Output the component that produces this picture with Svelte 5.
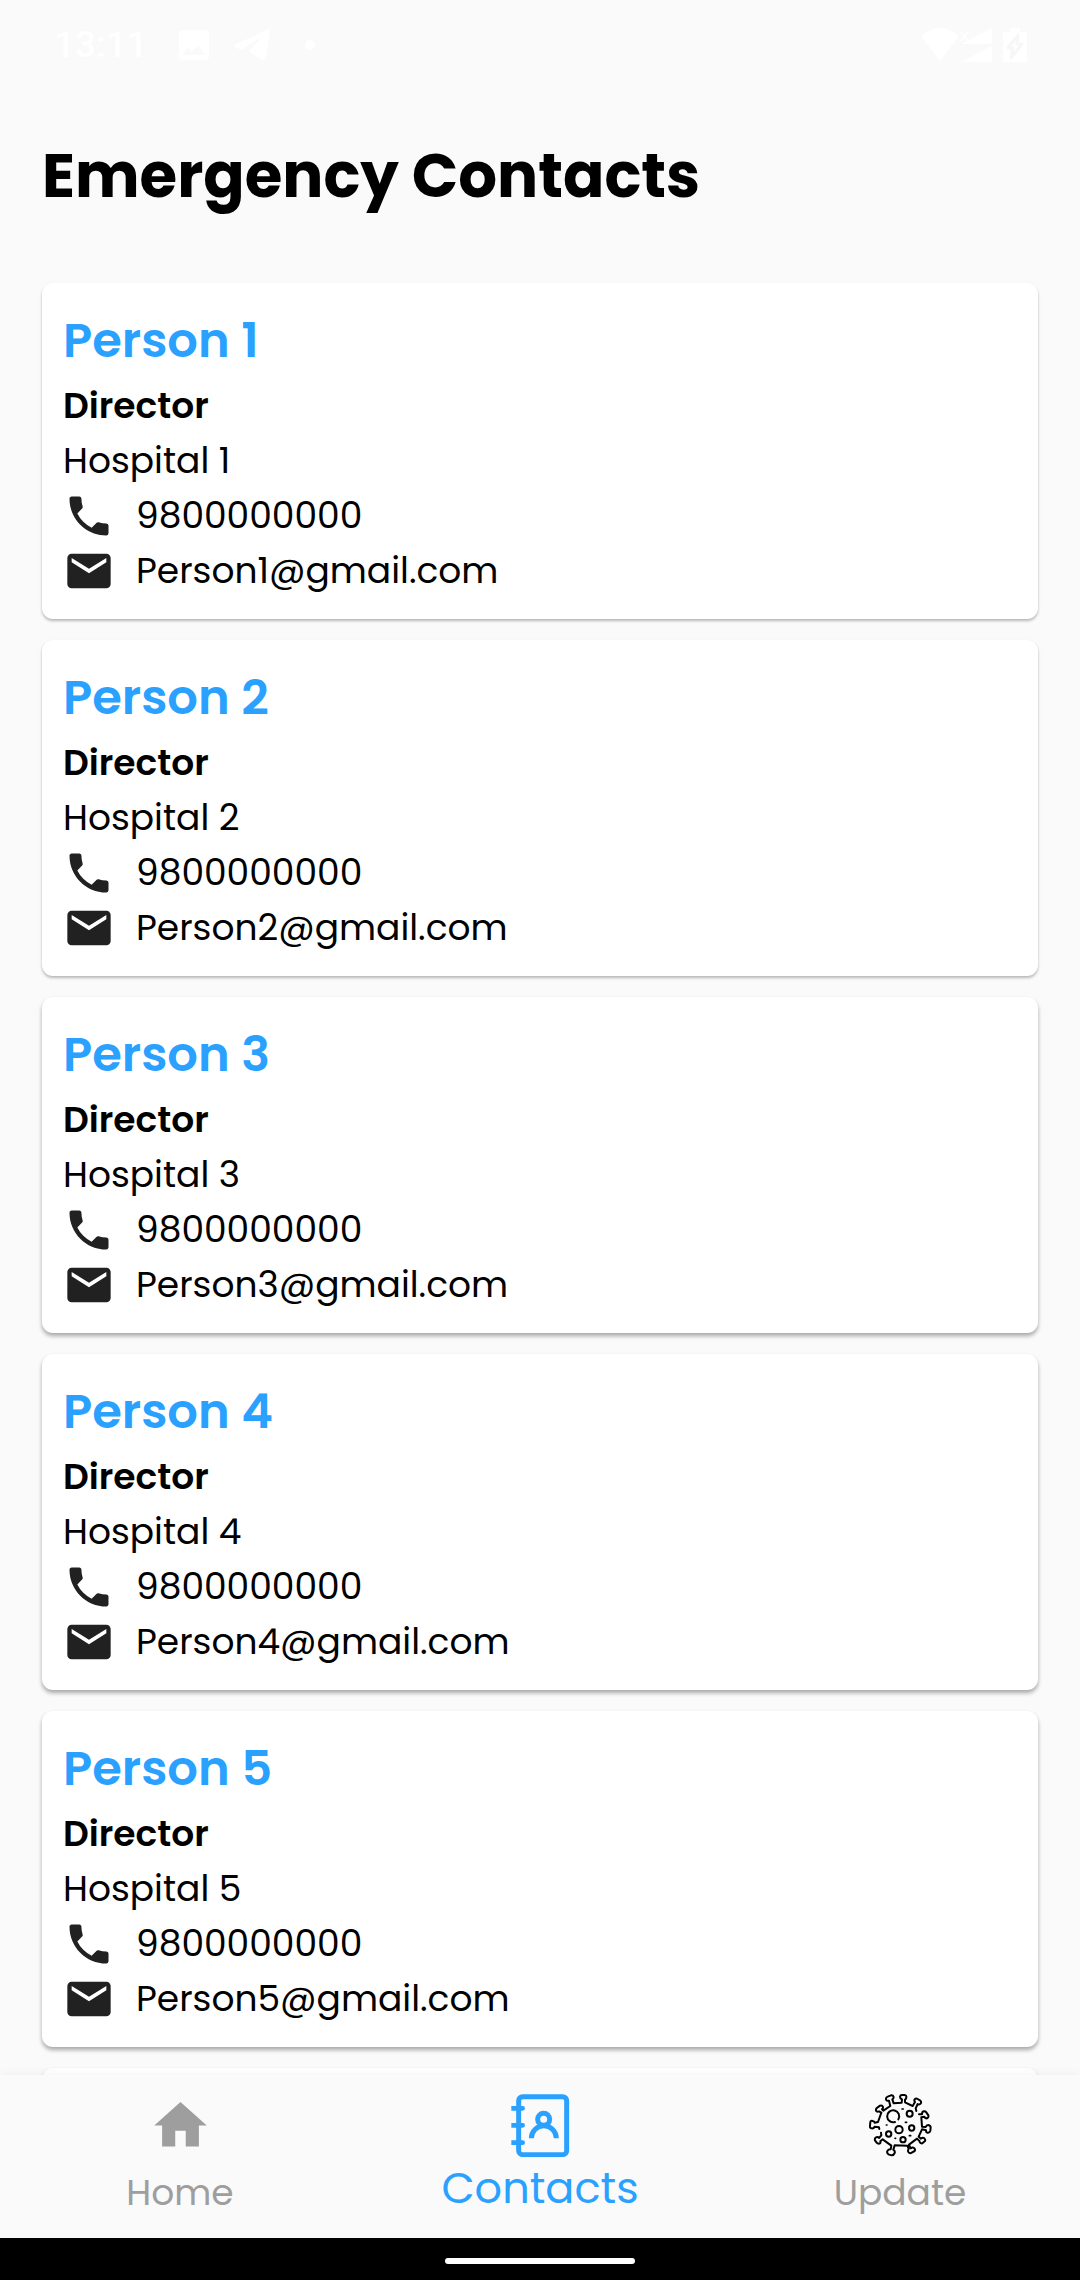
<script>
  const contacts = [1, 2, 3, 4, 5].map((n) => ({
    name: `Person ${n}`,
    role: 'Director',
    place: `Hospital ${n}`,
    phone: '9800000000',
    email: `Person${n}@gmail.com`
  }));
</script>

<div class="screen">
  <div class="status">
    <span class="clock">13:11</span>
    <svg class="s-image" viewBox="0 0 30 30" aria-hidden="true">
      <path fill-rule="evenodd" d="M4 0h22a4 4 0 0 1 4 4v22a4 4 0 0 1-4 4H4a4 4 0 0 1-4-4V4a4 4 0 0 1 4-4zM3 25h23l-7-10-6 7-4-5z" />
    </svg>
    <svg class="s-send" viewBox="0 0 36 32" aria-hidden="true">
      <path d="M35 0Q37 0 36 3L32 29Q31 32 28 31L16 23Q15 21 17 20L26 11Q26 9 24 10L9 20Q7 21 5 20L1 18Q-1 16 2 15L33 1Z" />
    </svg>
    <span class="dot"></span>
    <svg class="s-system" viewBox="0 0 106 34" aria-hidden="true">
      <path d="M0 8Q19-8 38 8L19 33Z" />
      <path d="M40 4l7 9M47 4l-7 9" fill="none" stroke="#fff" stroke-width="2" />
      <path d="M40 16L71 0V16ZM40 34L71 18V34Z" />
      <path d="M89 0h10v4h7v30H82V4h7z" />
      <path d="M97 7L87 20h5l-2 10 11-14h-5z" stroke="#f7f7f7" stroke-width="3" stroke-linejoin="round" />
    </svg>
  </div>

  <main>
    <h1>Emergency Contacts</h1>
    <div class="list">
      {#each contacts as c}
        <article>
          <h2>{c.name}</h2>
          <p class="role">{c.role}</p>
          <p>{c.place}</p>
          <a href="tel:{c.phone}">
            <svg viewBox="0 0 24 24" aria-hidden="true"><path d="M6.62 10.79c1.44 2.83 3.76 5.14 6.59 6.59l2.2-2.2c.27-.27.67-.36 1.02-.24 1.12.37 2.33.57 3.57.57.55 0 1 .45 1 1V20c0 .55-.45 1-1 1-9.39 0-17-7.61-17-17 0-.55.45-1 1-1h3.5c.55 0 1 .45 1 1 0 1.25.2 2.45.57 3.57.11.35.03.74-.25 1.02l-2.2 2.2z" /></svg>
            <span>{c.phone}</span>
          </a>
          <a href="mailto:{c.email}">
            <svg viewBox="0 0 24 24" aria-hidden="true"><path d="M20 4H4c-1.1 0-1.99.9-1.99 2L2 18c0 1.1.9 2 2 2h16c1.1 0 2-.9 2-2V6c0-1.1-.9-2-2-2zm0 4l-8 5-8-5V6l8 5 8-5v2z" /></svg>
            <span>{c.email}</span>
          </a>
        </article>
      {/each}
      <article aria-hidden="true"></article>
    </div>
  </main>

  <nav>
    <a href="#home">
      <svg viewBox="0 0 24 24" aria-hidden="true"><path fill="#9e9e9e" d="M10 20v-6h4v6h5v-8h3L12 3 2 12h3v8z" /></svg>
      <span>Home</span>
    </a>
    <a href="#contacts" class="active" aria-current="page">
      <svg viewBox="86 71 189 189" fill="none" stroke="#2aa1ff" stroke-width="15" aria-hidden="true">
        <rect x="115" y="79" width="144" height="174" rx="12" />
        <path d="M93 114H115M93 165H115M93 217H115" stroke-width="14" />
        <path d="M115 114H127M115 165H127M115 217H127" stroke-width="14" stroke-linecap="round" />
        <circle cx="190" cy="147" r="18" />
        <path d="M153 204A37 37 0 0 1 228 204" />
      </svg>
      <span>Contacts</span>
    </a>
    <a href="#update">
      <svg viewBox="86 42 189 189" fill="none" stroke="#000" stroke-width="6" stroke-linecap="round" stroke-linejoin="round" aria-hidden="true">
        <path d="M117 147L116 142 103 140Q101 146 94 145Q88 145 89 138L90 126Q91 121 97 123Q103 124 103 128L113 126 123 98 116 94Q109 97 107 91Q106 86 111 83L119 77Q126 75 128 81Q129 85 125 88L129 92 150 78 146 62Q138 64 137 58Q136 52 142 50L152 46Q158 45 160 51Q160 56 156 58L160 70 184 68 185 58Q179 56 179 50Q180 45 185 45L193 45Q199 46 198 52Q198 57 194 59L194 67 217 78 224 66Q220 61 224 57Q227 54 232 57L240 62Q244 66 241 71Q237 75 232 72L226 85 228 93M236 103L245 103Q245 94 251 94Q256 94 258 97L264 106Q266 112 260 115Q254 116 252 110L243 112 245 140 256 141Q258 135 264 135Q271 136 271 143L270 152Q268 159 261 158Q256 157 257 151L245 148 235 170 242 176Q247 171 252 175Q256 179 254 183L246 190Q240 191 238 186Q238 183 236 182L230 176 206 194 211 205Q217 201 221 204Q226 208 223 213L210 220Q204 219 203 214Q203 209 205 207L201 197 163 196 159 209Q165 213 163 219Q160 226 154 226L144 223Q139 219 141 213Q145 207 151 208L153 197 127 178 120 184Q122 190 116 191Q111 191 109 188L104 181Q102 175 107 172Q113 170 116 174L123 166 122 158" />
        <path d="M164 126A18 18 0 1 1 174 118" />
        <circle cx="208" cy="101" r="9" /><circle cx="176" cy="149" r="11" />
        <circle cx="214" cy="144" r="8" /><circle cx="145" cy="162" r="8" /><circle cx="188" cy="179" r="8" />
        <path d="M185 87h4M138 135h2M195 127h4M164 175h2M207 167h4" stroke-width="5" />
      </svg>
      <span>Update</span>
    </a>
  </nav>
  <div class="gesture"><span></span></div>
</div>

<style>
  :global(body) {
    margin: 0;
    background: #fafafa;
  }
  .screen {
    height: 100vh;
    display: flex;
    flex-direction: column;
    background: #fafafa;
    color: #000;
    font-family: Poppins, Inter, sans-serif;
    font-size: 36px;
  }
  .status {
    flex: none;
    height: 90px;
    box-sizing: border-box;
    padding: 0 53px 0 54px;
    display: flex;
    align-items: center;
    color: #fff;
    font: 500 37px/44px Roboto, sans-serif;
  }
  .status svg { fill: #fff; }
  .clock { width: 125px; }
  .s-image { width: 30px; height: 30px; }
  .s-send { width: 36px; height: 32px; margin-left: 25px; }
  .dot {
    width: 10px;
    height: 10px;
    margin-left: 35px;
    border-radius: 50%;
    background: #fff;
  }
  .s-system { width: 106px; height: 34px; margin-left: auto; }
  main {
    flex: 1;
    min-height: 0;
    overflow: hidden;
    padding: 0 42px;
  }
  h1, h2, p { margin: 0; }
  h1 {
    padding: 42px 0 63px;
    font-size: 61px;
    line-height: 88px;
    font-weight: 700;
  }
  .list {
    display: flex;
    flex-direction: column;
    gap: 21px;
  }
  article {
    padding: 21px;
    border-radius: 11px;
    background: #fff;
    box-shadow: 0 2px 3px rgba(0, 0, 0, 0.27);
  }
  article:nth-child(n + 3) {
    box-shadow: 0 3px 4px rgba(0, 0, 0, 0.33);
  }
  h2 {
    color: #2aa1ff;
    font-size: 48px;
    line-height: 74px;
    font-weight: 600;
  }
  p, article a { line-height: 55px; }
  .role { font-weight: 600; }
  article a {
    display: flex;
    align-items: center;
    gap: 21px;
    color: inherit;
    text-decoration: none;
  }
  article svg {
    width: 52px;
    height: 52px;
    fill: #212121;
  }
  nav {
    flex: none;
    position: relative;
    display: grid;
    grid-template-columns: repeat(3, 1fr);
    background: #fafafa;
    box-shadow: 0 -1px 9px rgba(0, 0, 0, 0.05);
  }
  nav a {
    height: 126px;
    padding: 19px 0 18px;
    display: flex;
    flex-direction: column;
    align-items: center;
    justify-content: space-between;
    color: #9e9e9e;
    line-height: 54px;
    text-decoration: none;
  }
  nav svg { width: 63px; height: 63px; }
  nav .active {
    color: #2aa1ff;
    font-size: 43px;
    line-height: 63px;
  }
  .gesture {
    flex: none;
    height: 42px;
    display: flex;
    align-items: center;
    justify-content: center;
    background: #000;
  }
  .gesture span {
    width: 190px;
    height: 6px;
    margin-top: 4px;
    border-radius: 3px;
    background: #fff;
  }
</style>
